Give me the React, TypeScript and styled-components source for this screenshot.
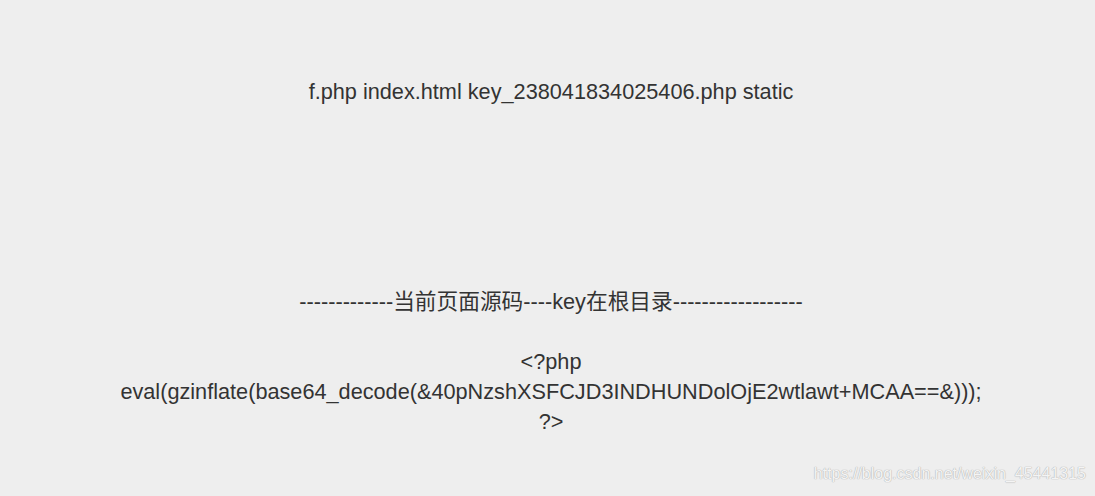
import React from "react";
import styled, { createGlobalStyle } from "styled-components";

const Global = createGlobalStyle`
  html, body { margin: 0; padding: 0; background: #eeeeee; }
  body { font-family: "Liberation Sans", Arial, sans-serif; color: #333333; }
`;

const Page = styled.div`
  position: relative;
  width: 1095px;
  height: 496px;
  background: #eeeeee;
  overflow: hidden;
  display: flex;
  flex-direction: column;
  align-items: center;
  padding-left: 7px;
  box-sizing: border-box;
  font-size: 21.7px;
  line-height: 30px;
`;

const FileList = styled.div`
  margin-top: 77px;
  text-align: center;
  white-space: nowrap;
`;

const Divider = styled.div`
  margin-top: 180px;
  text-align: center;
  white-space: nowrap;
  font-family: "Liberation Sans", "Noto Sans CJK SC", sans-serif;
`;

const Code = styled.div`
  margin-top: 30px;
  text-align: center;
  white-space: nowrap;
`;

const Watermark = styled.div`
  position: absolute;
  right: 9px;
  bottom: 12px;
  font-size: 16px;
  line-height: 20px;
  font-family: "Liberation Sans", Arial, sans-serif;
  color: #f4f4f4;
  text-shadow: 0 0 1px #b0b0b0, 0 0 1px #b0b0b0;
`;

export default function App() {
  return (
    <>
      <Global />
      <Page>
        <FileList>f.php index.html key_238041834025406.php static</FileList>
        <Divider>-------------当前页面源码----key在根目录------------------</Divider>
        <Code>
          &lt;?php
          <br />
          eval(gzinflate(base64_decode(&amp;40pNzshXSFCJD3INDHUNDolOjE2wtlawt+MCAA==&amp;)));
          <br />
          ?&gt;
        </Code>
        <Watermark>https://blog.csdn.net/weixin_45441315</Watermark>
      </Page>
    </>
  );
}
